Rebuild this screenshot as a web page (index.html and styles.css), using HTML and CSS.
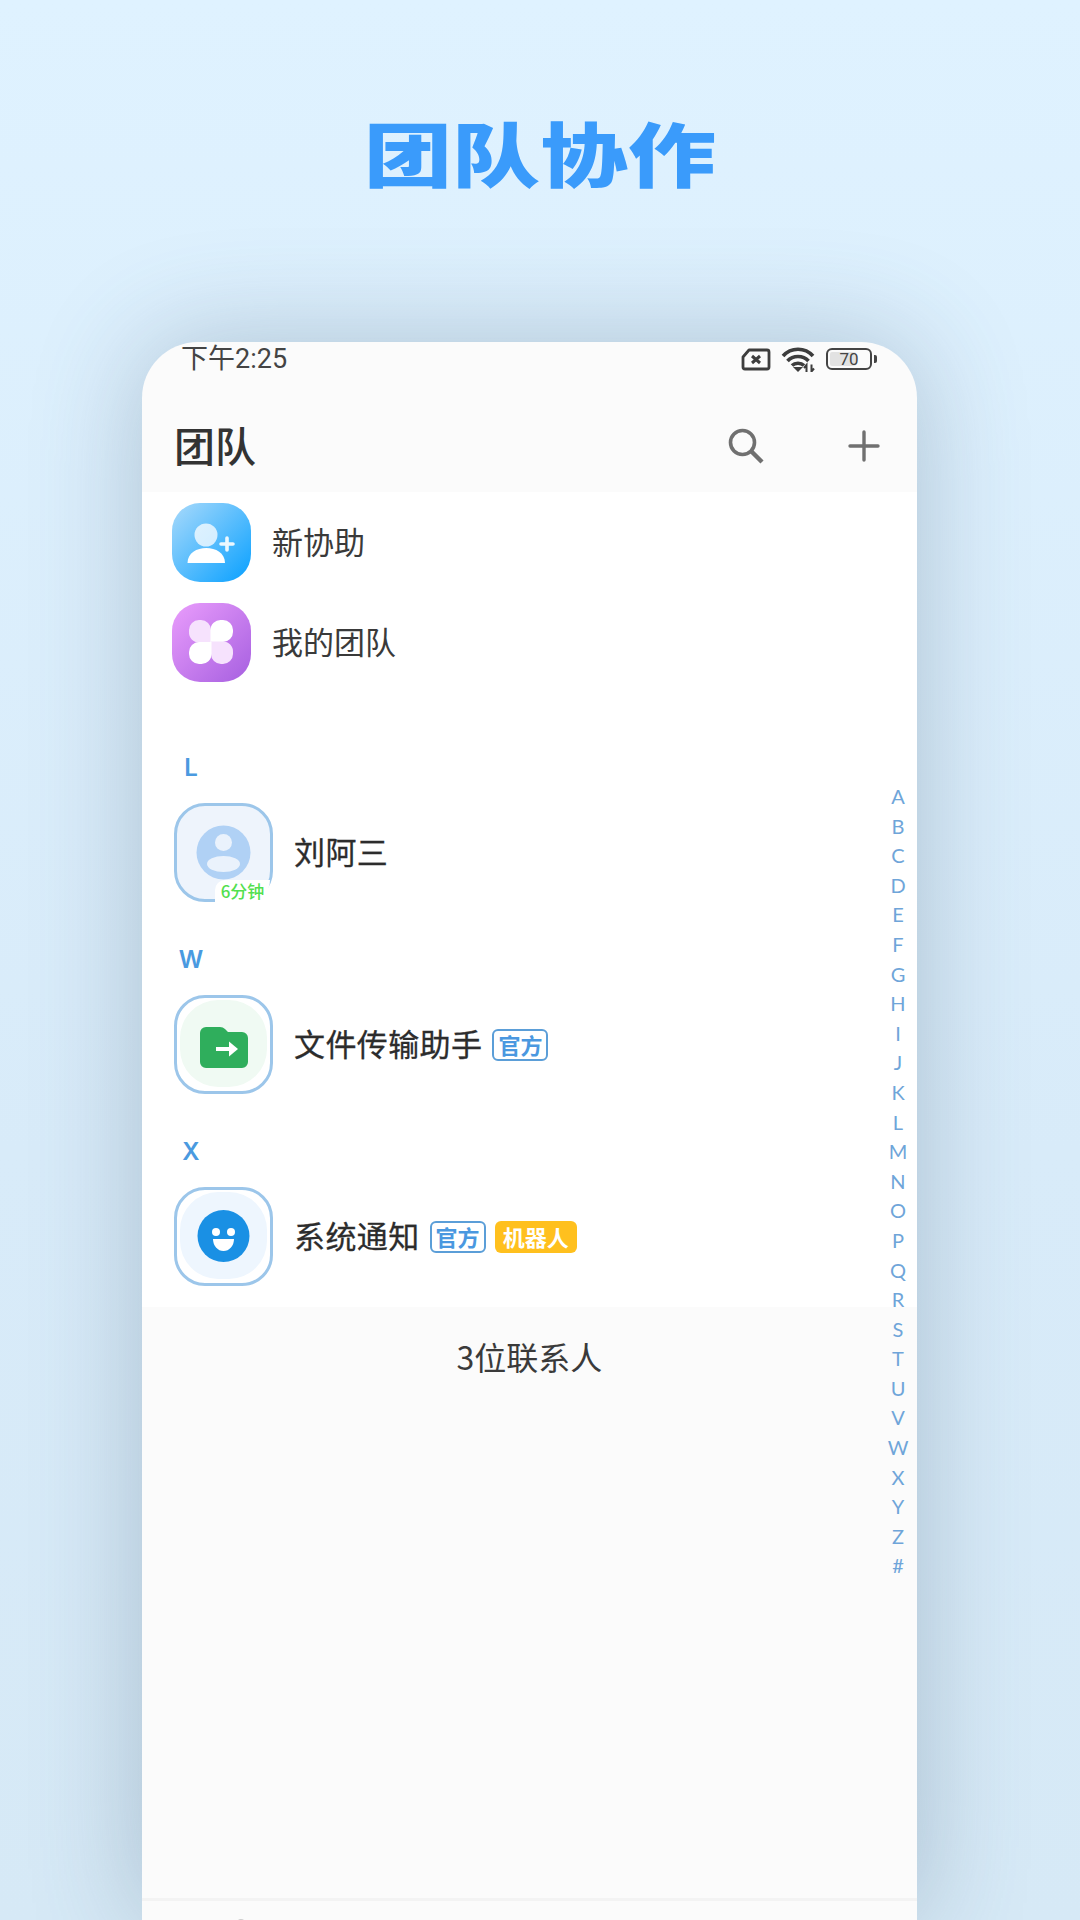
FILE: index.html
```html
<!DOCTYPE html>
<html>

<head>
    <meta charset="utf-8">
    <link rel="stylesheet" href="styles.css">
</head>

<body>
    <div class="page">
        <div class="promo"><span class="promoText">团队协作</span></div>

        <div class="phone">
            <div class="statusBar">
                <span class="time">下午2:25</span>
                <div class="statusIcons">
                    <svg class="simIcon" viewBox="0 0 30 23" fill="none" stroke="#3d3d3d">
                        <path d="M8 2 H26 a2 2 0 0 1 2 2 V19 a2 2 0 0 1 -2 2 H4 a2 2 0 0 1 -2 -2 V9 Z" stroke-width="2.8" stroke-linejoin="round" />
                        <path d="M11 8 L19 15 M19 8 L11 15" stroke-width="3" />
                    </svg>
                    <svg class="wifiIcon" viewBox="0 0 34 25" fill="none" stroke="#3d3d3d" stroke-width="3.6">
                        <path d="M2 9 C10 0 24 0 32 9" />
                        <path d="M6.5 14 C12 8 22 8 27.5 14" />
                        <path d="M11 18.5 C14 15.5 20 15.5 23 18.5" />
                        <path d="M12 20 L17 25 L22 20 Z" fill="#3d3d3d" stroke="none" />
                        <path d="M25.5 25 V18 L23 21 M30.5 17.5 V24.5 L33 21.5" stroke-width="2" />
                    </svg>
                    <div class="battery">
                        <div class="batteryBody">
                            <div class="batteryFill"></div>
                            <span class="batteryText">70</span>
                        </div>
                        <div class="batteryNub"></div>
                    </div>
                </div>
            </div>

            <div class="topBar">
                <span class="title">团队</span>
                <div class="actions">
                    <svg class="searchIcon" viewBox="0 0 36 36" fill="none" stroke="#707070">
                        <circle cx="14.5" cy="14.5" r="12" stroke-width="3.6" />
                        <path d="M23 23 L34 34" stroke-width="4.4" />
                    </svg>
                    <svg class="plusIcon" viewBox="0 0 32 32" fill="none" stroke="#707070" stroke-width="3.4" stroke-linecap="round">
                        <path d="M2 16 H30 M16 2 V30" />
                    </svg>
                </div>
            </div>

            <div class="list">
                <div class="menuRow">
                    <svg class="menuIcon" viewBox="0 0 79 79">
                        <defs>
                            <linearGradient id="blueTile" x1="0" y1="0" x2="1" y2="1">
                                <stop offset="0" stop-color="#a9dafb" />
                                <stop offset="1" stop-color="#08a0ff" />
                            </linearGradient>
                        </defs>
                        <rect width="79" height="79" rx="28" fill="url(#blueTile)" />
                        <circle cx="34" cy="32" r="11.5" fill="#fff" opacity=".75" />
                        <path d="M15.5 60 C15.5 40 53 40 53 60 Z" fill="#fff" />
                        <path d="M49 41 H61 M55 35 V47" stroke="#fff" stroke-width="3.6" stroke-linecap="round" opacity=".9" />
                    </svg>
                    <span class="menuLabel">新协助</span>
                </div>
                <div class="menuRow">
                    <svg class="menuIcon" viewBox="0 0 79 79">
                        <defs>
                            <linearGradient id="purpleTile" x1="0" y1="0" x2="1" y2="1">
                                <stop offset="0" stop-color="#ea9dfc" />
                                <stop offset="1" stop-color="#a65fe0" />
                            </linearGradient>
                        </defs>
                        <rect width="79" height="79" rx="28" fill="url(#purpleTile)" />
                        <path d="M39 39.5 H27 A10 10 0 0 1 17 29 V27 A10 10 0 0 1 27 17 H29 A10 10 0 0 1 39 27 Z" fill="#f6e2fd" />
                        <path d="M39 39.5 H27 A10 10 0 0 1 17 29 V27 A10 10 0 0 1 27 17 H29 A10 10 0 0 1 39 27 Z" fill="#fff" transform="rotate(90 39 39)" />
                        <path d="M39 39.5 H27 A10 10 0 0 1 17 29 V27 A10 10 0 0 1 27 17 H29 A10 10 0 0 1 39 27 Z" fill="#f6e2fd" transform="rotate(180 39 39)" />
                        <path d="M39 39.5 H27 A10 10 0 0 1 17 29 V27 A10 10 0 0 1 27 17 H29 A10 10 0 0 1 39 27 Z" fill="#fff" transform="rotate(270 39 39)" />
                    </svg>
                    <span class="menuLabel">我的团队</span>
                </div>

                <div class="group firstGroup">
                    <div class="letter">L</div>
                    <div class="contact">
                        <div class="avatar avatarPerson">
                            <svg class="avatarArt" viewBox="0 0 93 93">
                                <circle cx="46.5" cy="46.5" r="27" fill="#b0d1f5" />
                                <circle cx="46.5" cy="36.5" r="8.5" fill="#eaf2fc" />
                                <ellipse cx="46.5" cy="58" rx="16.5" ry="8" fill="#eaf2fc" />
                            </svg>
                            <span class="timeBadge">6分钟</span>
                        </div>
                        <span class="name">刘阿三</span>
                    </div>
                </div>

                <div class="group">
                    <div class="letter">W</div>
                    <div class="contact">
                        <div class="avatar">
                            <svg class="avatarArt" viewBox="0 0 93 93">
                                <rect x="3" y="2" width="87" height="87" rx="38" fill="#f0faf3" />
                                <path d="M29 29 H43 q3 0 5 2 l3 3 H65 a6 6 0 0 1 6 6 V64 a6 6 0 0 1 -6 6 H29 a6 6 0 0 1 -6 -6 V35 a6 6 0 0 1 6 -6 Z" fill="#2fae5c" />
                                <path d="M39 51 H53" stroke="#fff" stroke-width="4" />
                                <path d="M52 43.5 L61 51 L52 58.5 Z" fill="#fff" />
                            </svg>
                        </div>
                        <span class="name">文件传输助手</span>
                        <span class="tag tagOfficial">官方</span>
                    </div>
                </div>

                <div class="group lastGroup">
                    <div class="letter">X</div>
                    <div class="contact">
                        <div class="avatar">
                            <svg class="avatarArt" viewBox="0 0 93 93">
                                <rect x="3" y="2" width="87" height="87" rx="38" fill="#eef6fe" />
                                <circle cx="46.5" cy="46" r="26" fill="#1a90e4" />
                                <circle cx="39" cy="42" r="4" fill="#fff" />
                                <circle cx="54" cy="42" r="4" fill="#fff" />
                                <path d="M36 49 H57 A10.5 12 0 0 1 36 49 Z" fill="#fff" />
                            </svg>
                        </div>
                        <span class="name">系统通知</span>
                        <span class="tag tagOfficial">官方</span>
                        <span class="tag tagRobot">机器人</span>
                    </div>
                </div>
            </div>

            <div class="footer">
                <div class="count">3位联系人</div>
                <div class="tabBar"><span class="tabPeek"></span></div>
            </div>

            <div class="alphabet">
                <span>A</span><span>B</span><span>C</span><span>D</span><span>E</span><span>F</span><span>G</span>
                <span>H</span><span>I</span><span>J</span><span>K</span><span>L</span><span>M</span><span>N</span>
                <span>O</span><span>P</span><span>Q</span><span>R</span><span>S</span><span>T</span><span>U</span>
                <span>V</span><span>W</span><span>X</span><span>Y</span><span>Z</span><span>#</span>
            </div>
        </div>
    </div>
</body>

</html>
```
FILE: styles.css
```css
html,
body {
    margin: 0;
    padding: 0;
}

body {
    font-family: "Noto Sans CJK SC", "Noto Sans", sans-serif;
    color: #333;
}

.page {
    width: 1080px;
    height: 1920px;
    overflow: hidden;
    background: linear-gradient(#dff2ff, #d8ebf9 60%, #d6e9f6);
}

.promo {
    height: 304px;
    margin-bottom: 38px;
    display: flex;
    align-items: center;
    justify-content: center;
}

/* the original headline is a squat display face, so squash the heavy weight */
.promoText {
    display: block;
    font-size: 88px;
    font-weight: 900;
    line-height: 100px;
    color: #3a9bfb;
    transform: scale(1, 0.8);
}

.phone {
    position: relative;
    width: 775px;
    height: 1578px;
    margin-left: 142px;
    display: flex;
    flex-direction: column;
    background: #fbfbfb;
    border-radius: 56px 56px 0 0;
    box-shadow: 0 0 110px rgba(70, 95, 120, 0.32);
}

/* status bar */

.statusBar {
    flex: none;
    box-sizing: border-box;
    height: 48px;
    padding: 0 40px 14px 39px;
    display: flex;
    justify-content: space-between;
    align-items: center;
}

.time {
    font-family: "Roboto", "Noto Sans CJK SC", sans-serif;
    font-size: 27px;
    line-height: 34px;
    color: #444;
}

.statusIcons {
    display: flex;
    align-items: center;
    gap: 10px;
}

.simIcon {
    width: 30px;
    height: 23px;
}

.wifiIcon {
    width: 34px;
    height: 25px;
}

.battery {
    display: flex;
    align-items: center;
    gap: 2px;
    margin-left: 1px;
}

.batteryBody {
    position: relative;
    box-sizing: border-box;
    width: 46px;
    height: 22px;
    border: 2px solid #444;
    border-radius: 6px;
    display: flex;
    align-items: center;
    justify-content: center;
}

.batteryFill {
    position: absolute;
    left: 2px;
    top: 2px;
    bottom: 2px;
    width: 26px;
    background: #e2e2e2;
    border-radius: 2px;
}

.batteryText {
    position: relative;
    font-family: "Roboto", sans-serif;
    font-size: 17px;
    line-height: 18px;
    color: #444;
}

.batteryNub {
    width: 3px;
    height: 8px;
    background: #444;
    border-radius: 0 2px 2px 0;
}

/* top bar */

.topBar {
    flex: none;
    box-sizing: border-box;
    height: 102px;
    padding: 10px 37px 0 32px;
    display: flex;
    justify-content: space-between;
    align-items: center;
}

.title {
    margin-bottom: 4px;
    font-size: 41px;
    font-weight: 500;
    line-height: 50px;
    color: #333;
}

.actions {
    display: flex;
    align-items: center;
    gap: 84px;
}

.searchIcon {
    width: 36px;
    height: 36px;
}

.plusIcon {
    width: 32px;
    height: 32px;
}

/* list */

.list {
    flex: none;
    padding-top: 11px;
    background: #fff;
}

.menuRow {
    height: 100px;
    padding-left: 30px;
    display: flex;
    align-items: flex-start;
}

.menuIcon {
    width: 79px;
    height: 79px;
    flex: none;
}

.menuLabel {
    margin-left: 21px;
    font-size: 31px;
    line-height: 75px;
    color: #3a3a3a;
}

.group {
    padding: 0 0 38px 32px;
}

.firstGroup {
    margin-top: 45px;
}

.lastGroup {
    padding-bottom: 21px;
}

.letter {
    width: 34px;
    height: 40px;
    margin-bottom: 15px;
    text-align: center;
    font-family: "Inter", sans-serif;
    font-size: 24px;
    font-weight: 600;
    line-height: 40px;
    color: #4a9ae0;
}

.contact {
    display: flex;
    align-items: center;
}

.avatar {
    position: relative;
    box-sizing: border-box;
    width: 99px;
    height: 99px;
    flex: none;
    margin-right: 21px;
    background: #fff;
    border: 3px solid #9cc6ea;
    border-radius: 31px;
}

.avatarPerson {
    background: #eef4fc;
}

.avatarArt {
    display: block;
    width: 93px;
    height: 93px;
}

.timeBadge {
    position: absolute;
    right: 0;
    bottom: -3px;
    width: 55px;
    height: 22px;
    background: #fff;
    border-radius: 11px 0 24px 0;
    text-align: center;
    font-size: 17px;
    font-weight: 500;
    line-height: 22px;
    color: #52e04f;
}

.name {
    padding-bottom: 4px;
    font-size: 31px;
    letter-spacing: 0.4px;
    line-height: 40px;
    color: #2c2c2c;
    -webkit-text-stroke: 0.3px #2c2c2c;
}

.tag {
    box-sizing: border-box;
    height: 32px;
    border-radius: 6px;
    font-size: 22px;
    font-weight: 700;
    line-height: 26px;
}

.tagOfficial {
    margin-left: 10px;
    padding: 0 4px;
    border: 2px solid #5b9ed8;
    color: #4a98e0;
}

.tagRobot {
    margin-left: 9px;
    padding: 2px 8px;
    background: #ffc01e;
    color: #fff;
}

/* footer */

.footer {
    flex: 1;
    display: flex;
    flex-direction: column;
}

.count {
    flex: none;
    height: 100px;
    text-align: center;
    font-size: 32px;
    line-height: 98px;
    color: #3a3a3a;
}

.tabBar {
    flex: none;
    box-sizing: border-box;
    height: 22px;
    margin-top: 491px;
    padding: 18px 0 0 94px;
    overflow: hidden;
    border-top: 3px solid #f3f3f3;
}

.tabPeek {
    display: block;
    width: 10px;
    height: 10px;
    background: #ccc;
    border-radius: 50%;
}

/* index down the right edge, sits over the list */

.alphabet {
    position: absolute;
    top: 440px;
    right: 4px;
    width: 30px;
    display: flex;
    flex-direction: column;
    align-items: center;
    font-family: "Lato", sans-serif;
    font-size: 20px;
    line-height: 29.6px;
    color: #6fa5d9;
}
```
